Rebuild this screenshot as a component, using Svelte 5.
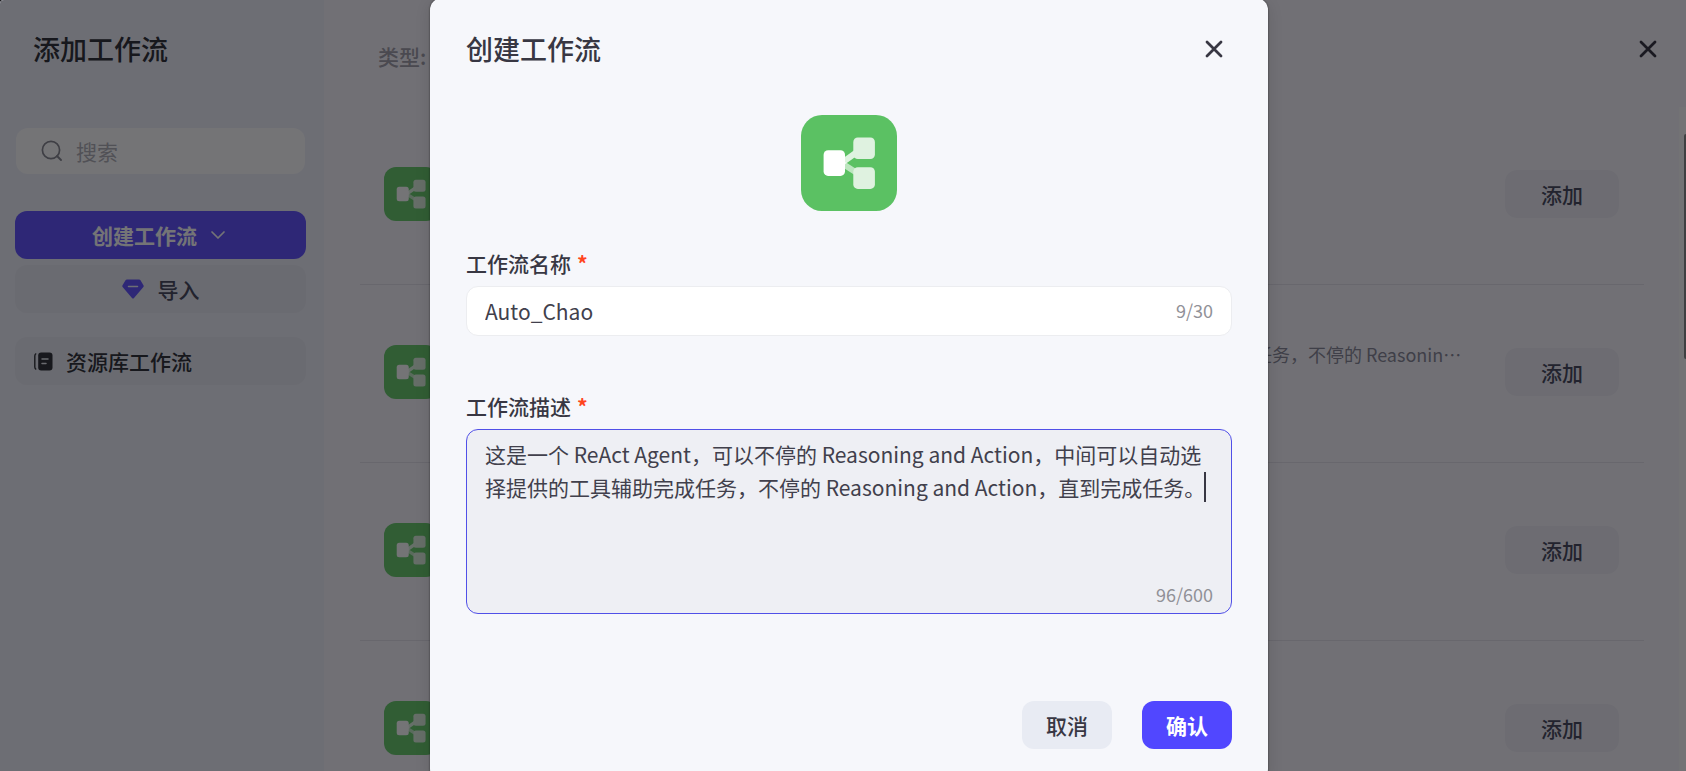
<script lang="ts">
	type Workflow = { id: number; description?: string };

	const intro =
		'这是一个 ReAct Agent，可以不停的 Reasoning and Action，中间可以自动选择提供的工具辅助完成任务，不停的 Reasoning and Action，直到完成任务。';

	const workflows: Workflow[] = [
		{ id: 1 },
		{ id: 2, description: intro },
		{ id: 3 },
		{ id: 4 }
	];

	const maxName = 30;
	const maxDescription = 600;

	let keyword = $state('');
	let name = $state('Auto_Chao');
	let description = $state(intro);
	let edited = $state(false);
	let open = $state(true);

	// the saved count stays until the text is changed
	let descriptionCount = $derived(edited ? description.length : 96);
</script>

{#snippet flowIcon()}
	<svg class="flow-icon" viewBox="0 0 96 96" aria-hidden="true">
		<path d="M42 47 L56 37" stroke="#fff" stroke-opacity="0.8" stroke-width="6" />
		<path d="M42 49 L56 58" stroke="#fff" stroke-opacity="0.6" stroke-width="6" />
		<rect x="52.3" y="22.5" width="21.6" height="21.6" rx="4.5" fill="#dff2e0" />
		<rect x="52.3" y="52.3" width="21.6" height="21.6" rx="4.5" fill="#dff2e0" />
		<rect x="22.6" y="35.3" width="21.4" height="25.6" rx="4.5" fill="#fff" />
	</svg>
{/snippet}

{#snippet closeIcon()}
	<svg width="18" height="18" viewBox="0 0 18 18" aria-hidden="true">
		<path d="M2 2 L16 16 M16 2 L2 16" stroke="currentColor" stroke-width="2.8" stroke-linecap="round" />
	</svg>
{/snippet}

<div class="page">
	<aside class="sidebar">
		<h1>添加工作流</h1>

		<label class="search">
			<svg width="22" height="22" viewBox="0 0 22 22" fill="none" aria-hidden="true">
				<circle cx="10" cy="10" r="8.6" stroke="currentColor" stroke-width="1.7" />
				<path d="M16 16 L20 20" stroke="currentColor" stroke-width="1.9" stroke-linecap="round" />
			</svg>
			<input type="text" placeholder="搜索" aria-label="搜索" bind:value={keyword} />
		</label>

		<button class="side-button create" onclick={() => (open = true)}>
			创建工作流
			<svg width="16" height="10" viewBox="0 0 16 10" fill="none" aria-hidden="true">
				<path d="M2 2 L8 8 L14 2" stroke="currentColor" stroke-width="1.7" stroke-linecap="round" stroke-linejoin="round" />
			</svg>
		</button>
		<button class="side-button import">
			<svg width="22" height="20" viewBox="0 0 22 20" aria-hidden="true">
				<path d="M5 0.5 H17 Q18 0.5 18.5 1.3 L21.6 6.5 Q22 7.3 21.4 8 L11.8 19.2 Q11 20 10.2 19.2 L0.6 8 Q0 7.3 0.4 6.5 L3.5 1.3 Q4 0.5 5 0.5 Z" fill="#6456ff" />
				<path d="M6.5 7.5 H15.5" stroke="#f0f2fb" stroke-width="1.5" stroke-linecap="round" />
			</svg>
			导入
		</button>
		<button class="side-button library">
			<svg width="19" height="19" viewBox="0 0 19 19" fill="none" aria-hidden="true">
				<path d="M2.2 1.5 Q0.8 2.4 0.8 4 V15 Q0.8 16.6 2.2 17.5" stroke="currentColor" stroke-width="1.4" />
				<path d="M4.2 3.5 Q4.2 0.5 7.2 0.5 H15.5 Q18.5 0.5 18.5 3.5 V15.5 Q18.5 18.5 15.5 18.5 H7.2 Q4.2 18.5 4.2 15.5 Z" fill="currentColor" />
				<path d="M8 7 H14 M8 11.5 H12" stroke="#e9ebf2" stroke-width="1.5" stroke-linecap="round" />
			</svg>
			资源库工作流
		</button>
	</aside>

	<main>
		<header class="toolbar">
			<span class="type">类型:</span>
			<button class="close" aria-label="关闭">{@render closeIcon()}</button>
		</header>

		<div class="content">
			<ul class="list">
				{#each workflows as item (item.id)}
					<li>
						<div class="thumb">{@render flowIcon()}</div>
						<div class="info">
							{#if item.description}
								<p>{item.description}</p>
							{/if}
						</div>
						<button class="add">添加</button>
					</li>
				{/each}
			</ul>
			<div class="track"><div class="handle"></div></div>
		</div>
	</main>

	{#if open}
		<div class="mask">
			<div class="dialog" role="dialog" aria-modal="true" aria-labelledby="dialog-title">
				<header>
					<h2 id="dialog-title">创建工作流</h2>
					<button class="close" aria-label="关闭" onclick={() => (open = false)}>
						{@render closeIcon()}
					</button>
				</header>

				<div class="logo">{@render flowIcon()}</div>

				<label class="caption" for="flow-name">工作流名称<span>*</span></label>
				<div class="field">
					<input id="flow-name" type="text" maxlength={maxName} bind:value={name} />
					<span class="count">{name.length}/{maxName}</span>
				</div>

				<label class="caption" for="flow-description">工作流描述<span>*</span></label>
				<div class="field area">
					<textarea
						id="flow-description"
						rows="4"
						maxlength={maxDescription}
						bind:value={description}
						oninput={() => (edited = true)}
					></textarea>
					<span class="count">{descriptionCount}/{maxDescription}</span>
					{#if !edited}
						<i class="caret"></i>
					{/if}
				</div>

				<footer>
					<button class="cancel" onclick={() => (open = false)}>取消</button>
					<button class="confirm">确认</button>
				</footer>
			</div>
		</div>
	{/if}
</div>

<style>
	:global(body) {
		background: #1c1c1f;
	}

	.page {
		position: relative;
		display: flex;
		height: 100vh;
		overflow: hidden;
		border-radius: 4px 0 0 0;
		background: #f9f7fd;
		color: #383743;
		font-family: 'Noto Sans CJK SC', 'Noto Sans', sans-serif;
		font-size: 21px;
		line-height: 32px;
	}

	.page * {
		box-sizing: border-box;
	}

	h1,
	h2 {
		margin: 0;
		font-size: 27px;
		font-weight: 500;
		line-height: 40px;
	}

	button {
		display: flex;
		align-items: center;
		justify-content: center;
		padding: 0;
		border: none;
		border-radius: 12px;
		background: none;
		color: inherit;
		font: inherit;
		font-weight: 500;
		cursor: pointer;
	}

	input,
	textarea {
		width: 100%;
		min-width: 0;
		padding: 0;
		border: none;
		outline: none;
		background: none;
		color: inherit;
		font: inherit;
	}

	.flow-icon {
		display: block;
		width: 100%;
		height: 100%;
	}

	.close {
		width: 36px;
		height: 36px;
	}

	.sidebar {
		display: flex;
		flex: none;
		flex-direction: column;
		width: 324px;
		padding: 29px 18px 0 15px;
		background: #f0f2fb;
	}

	.sidebar h1 {
		margin: 0 0 59px 18px;
		color: #32343a;
	}

	.search {
		display: flex;
		align-items: center;
		gap: 13px;
		height: 46px;
		margin: 0 1px 37px;
		padding: 0 25px;
		border-radius: 12px;
		background: #fff;
		color: #8a8b93;
	}

	.search svg {
		flex: none;
	}

	.search input::placeholder {
		color: #b2b2b8;
		opacity: 1;
	}

	.side-button {
		height: 48px;
		background: #e9ebf3;
	}

	.create {
		gap: 13px;
		margin-bottom: 6px;
		padding-right: 3px;
		background: #6456ff;
		color: #fff;
		font-weight: 700;
	}

	.import {
		gap: 14px;
		margin-bottom: 24px;
		color: #4a4c60;
	}

	.library {
		justify-content: flex-start;
		gap: 13px;
		padding: 0 19px;
		color: #32343a;
	}

	main {
		display: flex;
		flex: 1;
		flex-direction: column;
		min-width: 0;
	}

	.toolbar {
		display: flex;
		flex: none;
		align-items: flex-start;
		justify-content: space-between;
		height: 107px;
		padding: 31px 20px 0 54px;
	}

	.type {
		padding-top: 9px;
		color: #a3a1ab;
		font-weight: 500;
	}

	.content {
		display: flex;
		flex: 1;
		min-height: 0;
		overflow: hidden;
	}

	.list {
		flex: 1;
		min-width: 0;
		margin: 0;
		padding: 0 35px 0 36px;
		list-style: none;
	}

	.list li {
		display: flex;
		align-items: center;
		height: 178px;
		padding: 0 25px 3px 24px;
		border-bottom: 1px solid #e5e3eb;
	}

	.thumb {
		flex: none;
		width: 54px;
		height: 54px;
		border-radius: 12px;
		background: #6acc6e;
	}

	.info {
		flex: 1;
		min-width: 0;
		margin: 0 40px 36px 22px;
	}

	.info p {
		margin: 0;
		overflow: hidden;
		color: #8b8b99;
		font-size: 18px;
		text-overflow: ellipsis;
		white-space: nowrap;
	}

	.add {
		flex: none;
		width: 114px;
		height: 48px;
		background: #f0eef7;
		color: #4a4c60;
	}

	.track {
		flex: none;
		width: 7px;
		padding: 27px 0 0 5px;
		background: #fcfcfc;
	}

	.handle {
		height: 225px;
		border-radius: 2px 0 0 2px;
		background: #8b8c8c;
	}

	.mask {
		position: absolute;
		inset: 0;
		display: flex;
		align-items: flex-start;
		justify-content: center;
		padding-left: 12px;
		background: rgba(2, 2, 6, 0.55);
	}

	.dialog {
		flex: 0 1 838px;
		margin-top: -2px;
		padding: 31px 36px 32px;
		border-radius: 12px;
		background: #f6f7fb;
		box-shadow:
			0 0 2px rgba(0, 0, 0, 0.6),
			0 4px 16px rgba(0, 0, 0, 0.12);
	}

	.dialog header {
		display: flex;
		align-items: center;
		justify-content: space-between;
	}

	.logo {
		width: 96px;
		height: 96px;
		margin: 46px auto 36px;
		border-radius: 21px;
		background: #5bc163;
	}

	.caption {
		display: block;
		margin-bottom: 7px;
		font-weight: 500;
	}

	.caption span {
		margin-left: 6px;
		color: #ff441e;
		font-weight: 700;
	}

	.field {
		position: relative;
		display: flex;
		align-items: center;
		height: 50px;
		margin-bottom: 54px;
		padding: 0 18px;
		border: 1px solid #ecedf0;
		border-radius: 12px;
		background: #fff;
		color: #41404c;
	}

	.count {
		padding-bottom: 2px;
		color: #919197;
		font-size: 18px;
		line-height: 24px;
	}

	.area {
		flex-direction: column;
		align-items: stretch;
		height: auto;
		margin-bottom: 87px;
		padding: 8px 18px 5px;
		border-color: #5150e8;
		background: #eeeff4;
	}

	.area textarea {
		display: block;
		height: 144px;
		line-height: 33px;
		resize: none;
	}

	.area .count {
		align-self: flex-end;
	}

	.caret {
		position: absolute;
		top: 42px;
		right: 25px;
		width: 2px;
		height: 30px;
		background: #383743;
	}

	footer {
		display: flex;
		justify-content: flex-end;
		gap: 30px;
	}

	footer button {
		width: 90px;
		height: 48px;
	}

	.cancel {
		background: #e8ebf3;
	}

	.confirm {
		background: #5147ff;
		color: #fff;
		font-weight: 700;
	}
</style>
